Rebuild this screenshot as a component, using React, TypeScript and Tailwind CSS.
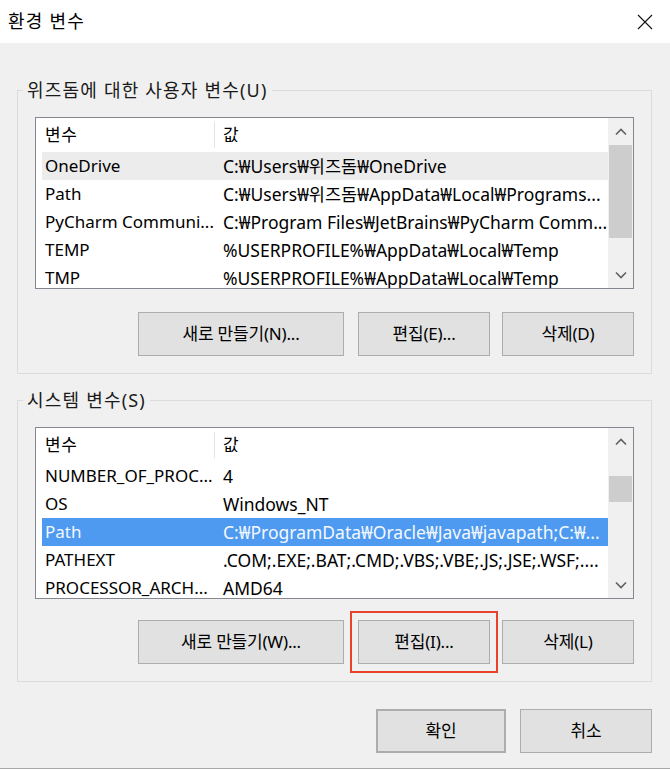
import React from 'react';

type Row = { name: string; value: string };

const userVars: Row[] = [
    { name: 'OneDrive', value: 'C:₩Users₩위즈돔₩OneDrive' },
    { name: 'Path', value: 'C:₩Users₩위즈돔₩AppData₩Local₩Programs...' },
    { name: 'PyCharm Communi...', value: 'C:₩Program Files₩JetBrains₩PyCharm Comm...' },
    { name: 'TEMP', value: '%USERPROFILE%₩AppData₩Local₩Temp' },
    { name: 'TMP', value: '%USERPROFILE%₩AppData₩Local₩Temp' },
];

const systemVars: Row[] = [
    { name: 'NUMBER_OF_PROC...', value: '4' },
    { name: 'OS', value: 'Windows_NT' },
    { name: 'Path', value: 'C:₩ProgramData₩Oracle₩Java₩javapath;C:₩...' },
    { name: 'PATHEXT', value: '.COM;.EXE;.BAT;.CMD;.VBS;.VBE;.JS;.JSE;.WSF;....' },
    { name: 'PROCESSOR_ARCH...', value: 'AMD64' },
];

function Chevron({ up = false }: { up?: boolean }) {
    return (
        <svg width="12" height="8" viewBox="0 0 12 8" fill="none">
            <path
                d={up ? 'M1 6.5L6 1.5l5 5' : 'M1 1.5l5 5 5-5'}
                stroke="#606060"
                strokeWidth="1.6"
            />
        </svg>
    );
}

function ScrollBar({ thumbClass }: { thumbClass: string }) {
    return (
        <div className="flex w-[25px] shrink-0 flex-col bg-[#f0f0f0]">
            <div className="flex h-[27px] shrink-0 items-center justify-center">
                <Chevron up />
            </div>
            <div className="flex flex-1 flex-col px-[1px]">
                <div className={`bg-[#cdcdcd] ${thumbClass}`} />
            </div>
            <div className="flex h-[27px] shrink-0 items-center justify-center">
                <Chevron />
            </div>
        </div>
    );
}

function VarList({
    rows,
    hoverIndex,
    selectedIndex,
    thumbClass,
}: {
    rows: Row[];
    hoverIndex?: number;
    selectedIndex?: number;
    thumbClass: string;
}) {
    return (
        <div className="flex h-[172px] border border-[#828790] bg-white">
            <div className="flex min-w-0 flex-1 flex-col overflow-hidden pl-[6px]">
                {/* Header */}
                <div className="flex h-[34px] shrink-0 items-center">
                    <div className="flex h-[26px] w-[173px] shrink-0 items-center border-r border-[#e5e5e5] pl-[3px] tracking-[0.5px]">
                        변수
                    </div>
                    <div className="pl-[8px]">값</div>
                </div>

                {rows.map((row, index) => {
                    const selected = index === selectedIndex;
                    const hover = index === hoverIndex;
                    return (
                        <div
                            key={row.name + index}
                            className={`flex h-[28px] shrink-0 items-center ${
                                selected ? 'bg-[#4d9af0] text-[#f4f8ff]' : hover ? 'bg-[#ececec]' : ''
                            }`}
                        >
                            <div className="w-[173px] shrink-0 overflow-hidden whitespace-nowrap pl-[3px]">
                                {row.name}
                            </div>
                            <div className="min-w-0 flex-1 overflow-hidden whitespace-nowrap pl-[8px] text-[17.5px]">
                                {row.value}
                            </div>
                        </div>
                    );
                })}
            </div>
            <ScrollBar thumbClass={thumbClass} />
        </div>
    );
}

function Button({ label, className = '' }: { label: string; className?: string }) {
    return (
        <button
            className={`flex h-[44px] items-center justify-center border border-[#adadad] bg-[#e1e1e1] text-[17px] tracking-[-0.2px] text-black ${className}`}
        >
            {label}
        </button>
    );
}

function Group({ title, children }: { title: string; children: React.ReactNode }) {
    return (
        <fieldset className="border border-[#dcdcdc]">
            <legend className="ml-[5px] px-[4px] text-[18px] leading-[24px] tracking-[1.2px] text-[#1a1a1a]">
                {title}
            </legend>
            <div className="px-[17px] pb-[17px] pt-[15px]">{children}</div>
        </fieldset>
    );
}

export default function App() {
    return (
        <div className="flex h-[769px] w-[670px] flex-col border-b border-[#a8a8a8] bg-[#f0f0f0] text-[17px] text-black [font-family:'Noto_Sans','Noto_Sans_CJK_KR',sans-serif]">
            {/* Title bar */}
            <div className="flex h-[43px] shrink-0 items-center justify-between bg-white pl-[8px] pr-[17px]">
                <span className="text-[18px] tracking-[1.2px] text-black">환경 변수</span>
                <svg width="16" height="16" viewBox="0 0 16 16" fill="none">
                    <path d="M1 1l14 14M15 1L1 15" stroke="#111" strokeWidth="1.1" />
                </svg>
            </div>

            <div className="flex flex-col pl-[17px] pr-[18px] pt-[35px]">
                <Group title="위즈돔에 대한 사용자 변수(U)">
                    <VarList rows={userVars} hoverIndex={0} thumbClass="h-[93px]" />
                    <div className="mt-[23px] flex justify-end">
                        <Button label="새로 만들기(N)..." className="w-[206px]" />
                        <Button label="편집(E)..." className="ml-[14px] w-[132px]" />
                        <Button label="삭제(D)" className="ml-[12px] w-[132px]" />
                    </div>
                </Group>

                <div className="mt-[14px]">
                    <Group title="시스템 변수(S)">
                        <VarList rows={systemVars} selectedIndex={2} thumbClass="mt-[21px] h-[26px]" />
                        <div className="mt-[21px] flex justify-end">
                            <Button label="새로 만들기(W)..." className="w-[206px]" />
                            <div className="relative ml-[14px]">
                                <Button label="편집(I)..." className="w-[132px]" />
                                {/* annotation box */}
                                <span className="pointer-events-none absolute -bottom-[9px] -left-[8px] -right-[8px] -top-[9px] border-2 border-[#e8412c]" />
                            </div>
                            <Button label="삭제(L)" className="ml-[12px] w-[132px]" />
                        </div>
                    </Group>
                </div>

                <div className="mt-[27px] flex justify-end">
                    <Button label="확인" className="h-[43px] w-[130px] border-2 border-[#0078d7]" />
                    <Button label="취소" className="ml-[14px] h-[43px] w-[132px]" />
                </div>
            </div>
        </div>
    );
}
